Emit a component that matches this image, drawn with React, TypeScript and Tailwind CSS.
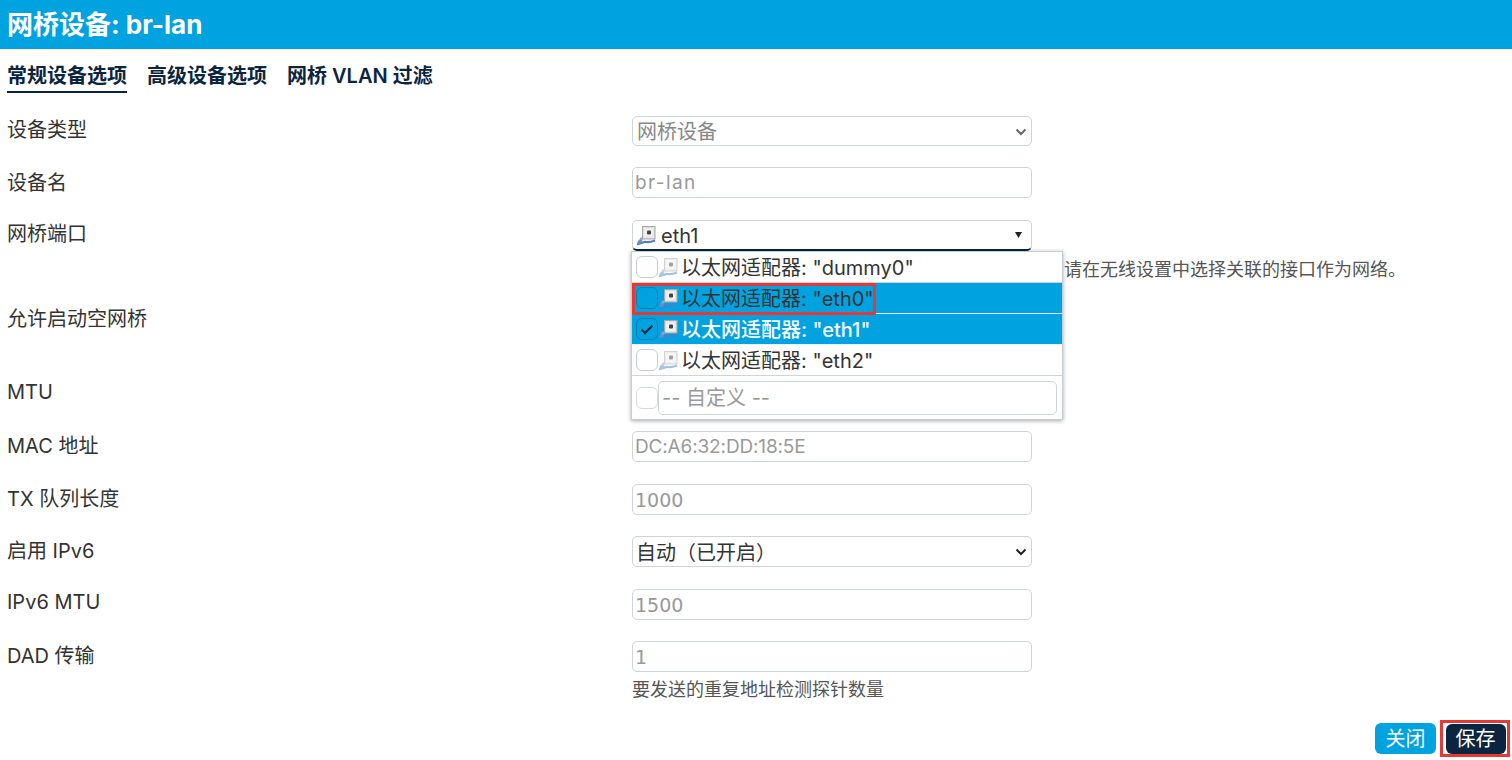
const font = "font-['Inter','Noto_Sans_CJK_SC',sans-serif]"

function PortIcon({ dim }: { dim?: boolean }) {
  return (
    <svg width="20" height="22" viewBox="0 0 20 22" className={`shrink-0 ${dim ? 'opacity-50' : ''}`}>
      <rect x="6.5" y="2.5" width="12.5" height="12.5" fill="#dcdcdc" stroke="#a9a9a9" />
      <rect x="8" y="4" width="9.5" height="9.5" fill="#efefef" />
      <rect x="11" y="6.5" width="4" height="4" rx="1" fill="#444" />
      <path d="M7 13.5 L4.5 13.5 L2.5 17 L6 17 Z" fill="#93a5ba" />
      <path d="M1 20 C4 20.5 7 17.5 10 18 C13 18.5 15 18 19 16.5" fill="none" stroke="#4a80c4" strokeWidth="2.2" />
      <path d="M2 16.5 L6.5 16.5 L4.5 20 L1 20 Z" fill="#5b8fd0" />
    </svg>
  )
}

function Field({
  label,
  children,
  height,
  labelPad = 'pt-[2px]',
}: {
  label: string
  children?: React.ReactNode
  height: string
  labelPad?: string
}) {
  return (
    <div className={`flex ${height}`}>
      <div className={`w-[625px] shrink-0 ${labelPad} text-[20px] leading-[26px] text-[#333]`}>{label}</div>
      <div className="w-[400px] shrink-0">{children}</div>
    </div>
  )
}

function TextBox({ value, textClass }: { value?: string; textClass?: string }) {
  return (
    <div className={`flex h-[31px] items-center rounded-[5px] border border-[#ced4da] bg-white pl-[2px] pt-[2px] text-[19px] text-[#999] ${textClass ?? ''}`}>
      {value}
    </div>
  )
}

function Chevron({ color }: { color: string }) {
  return (
    <svg width="12" height="8" viewBox="0 0 12 8" className="mr-[4px]">
      <path d="M1.5 1.5 L6 6 L10.5 1.5" fill="none" stroke={color} strokeWidth="2" />
    </svg>
  )
}

function OptionRow({ name, active, checked }: { name: string; active?: boolean; checked?: boolean }) {
  return (
    <div
      className={`flex h-[31px] items-center border-b pl-[4px] text-[20px] ${
        active ? 'border-[#e8f4fb] bg-[#00a3e0]' : 'border-[#ced4da] bg-white'
      } ${checked ? 'font-medium text-white' : 'text-[#333]'}`}
    >
      <span
        className={`flex h-[22px] w-[22px] shrink-0 items-center justify-center rounded-[6px] border ${
          active ? 'border-[#0f7cb0]' : 'border-[#c5ccd3] bg-white'
        }`}
      >
        {checked && (
          <svg width="14" height="11" viewBox="0 0 14 11">
            <path d="M1.5 5.5 L5 9 L12.5 1.5" fill="none" stroke="#0b2540" strokeWidth="2" />
          </svg>
        )}
      </span>
      <PortIcon dim={!active} />
      <span className="ml-[3px] whitespace-nowrap pt-[1px]">
        以太网适配器: "{name}"
      </span>
    </div>
  )
}

export default function App() {
  return (
    <div className={`${font} h-[760px] w-[1512px] overflow-hidden bg-white text-[#333]`}>
      <h1 className="flex h-[49px] items-center bg-[#00a3e0] pl-[7px] text-[26px] font-bold text-white">
        网桥设备: br-lan
      </h1>

      <div className="flex h-[67px] gap-[20px] pl-[7px] pt-[12px] text-[20px] font-semibold text-[#0b2540]">
        <div className="h-[32px] border-b-2 border-[#0b2540]">常规设备选项</div>
        <div>高级设备选项</div>
        <div>网桥 VLAN 过滤</div>
      </div>

      <div className="pl-[7px]">
        <Field label="设备类型" height="h-[51px]" labelPad="pt-[1px]">
          <div className="flex h-[30px] items-center justify-between rounded-[5px] border border-[#ced4da] bg-white pl-[4px] pt-[1px] text-[20px] text-[#888]">
            网桥设备
            <Chevron color="#666" />
          </div>
        </Field>
        <Field label="设备名" height="h-[53px]" labelPad="pt-[3px]">
          <TextBox value="br-lan" textClass="tracking-[1.4px]" />
        </Field>
        <Field label="网桥端口" height="h-[85px]" labelPad="pt-[1px]">
          <div className="relative">
            <div className="flex h-[31px] items-center justify-between rounded-[5px] border border-[#ced4da] border-b-2 border-b-[#0b2540] bg-white pl-[3px] text-[20px] text-[#333]">
              <span className="flex items-center gap-[5px]">
                <PortIcon />
                <span className="pt-[1px]">eth1</span>
              </span>
              <svg width="7" height="6" viewBox="0 0 7 6" className="mr-[9px]">
                <path d="M0 0 H7 L3.5 6 Z" fill="#222" />
              </svg>
            </div>
            <div className="absolute -left-[1px] top-[31px] z-10 w-[432px] border border-[#c5ccd3] bg-white shadow-[0_1px_4px_rgba(0,0,0,0.35)]">
              <OptionRow name="dummy0" />
              <OptionRow name="eth0" active />
              <OptionRow name="eth1" active checked />
              <OptionRow name="eth2" />
              <div className="flex h-[43px] items-center pl-[4px]">
                <span className="h-[22px] w-[22px] shrink-0 rounded-[6px] border border-[#d5dade]" />
                <div className="flex h-[34px] w-[399px] items-center rounded-[5px] border border-[#ced4da] pl-[3px] text-[20px] text-[#999]">
                  -- 自定义 --
                </div>
              </div>
              <div className="absolute left-[0px] top-[31px] h-[32px] w-[244px] border-[3px] border-[#e53935]" />
            </div>
            <div className="absolute left-[432px] top-[36px] whitespace-nowrap text-[18px] text-[#555]">
              请在无线设置中选择关联的接口作为网络。
            </div>
          </div>
        </Field>
        <Field label="允许启动空网桥" height="h-[74px]" labelPad="pt-[1px]" />
        <Field label="MTU" height="h-[52px]" labelPad="pt-[0px]">
          <TextBox />
        </Field>
        <Field label="MAC 地址" height="h-[53px]">
          <TextBox value="DC:A6:32:DD:18:5E" textClass="tracking-[-0.15px]" />
        </Field>
        <Field label="TX 队列长度" height="h-[52px]">
          <TextBox value="1000" textClass="font-['DejaVu_Sans',sans-serif]" />
        </Field>
        <Field label="启用 IPv6" height="h-[53px]">
          <div className="flex h-[31px] items-center justify-between rounded-[5px] border border-[#ced4da] bg-white pl-[3px] pt-[1px] text-[20px] text-[#333]">
            <span>
              自动<span className="font-['Noto_Sans_CJK_TC',sans-serif]">（</span>已开启
              <span className="font-['Noto_Sans_CJK_TC',sans-serif]">）</span>
            </span>
            <Chevron color="#222" />
          </div>
        </Field>
        <Field label="IPv6 MTU" height="h-[52px]" labelPad="pt-[0px]">
          <TextBox value="1500" textClass="font-['DejaVu_Sans',sans-serif]" />
        </Field>
        <Field label="DAD 传输" height="h-[79px]">
          <TextBox value="1" textClass="font-['DejaVu_Sans',sans-serif]" />
          <div className="mt-[4px] text-[18px] text-[#555]">要发送的重复地址检测探针数量</div>
        </Field>
      </div>

      <div className="flex items-center justify-end gap-[4px] pr-[2px]">
        <div className="flex h-[31px] w-[61px] items-center justify-center rounded-[6px] bg-[#00a3e0] text-[20px] text-white">
          关闭
        </div>
        <div className="flex h-[37px] w-[70px] items-center justify-center border-[3px] border-[#e53935] pl-[1px]">
          <div className="flex h-[30px] w-[60px] items-center justify-center rounded-[6px] bg-[#0b2540] text-[20px] text-white">
            保存
          </div>
        </div>
      </div>
    </div>
  )
}
